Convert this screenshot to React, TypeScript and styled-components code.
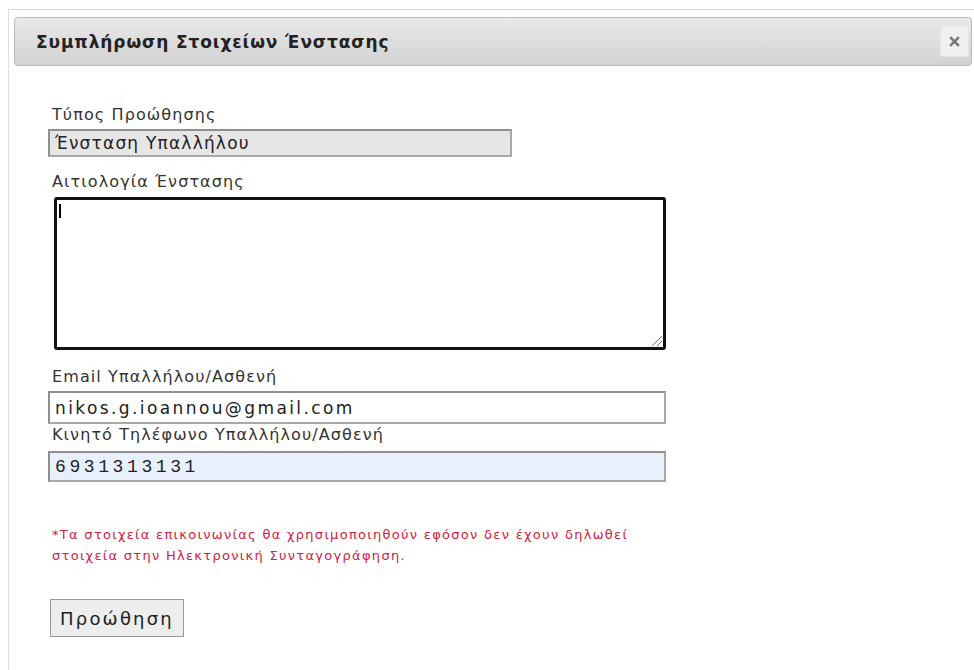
import React from "react";
import styled, { createGlobalStyle } from "styled-components";

const GlobalStyle = createGlobalStyle`
  html, body {
    margin: 0;
    padding: 0;
    background: #ffffff;
    overflow: hidden;
  }
  body {
    font-family: "DejaVu Sans", Verdana, sans-serif;
    color: #333333;
  }
`;

const Page = styled.div`
  padding: 9px 0 0 8px;
  height: 670px;
  box-sizing: border-box;
  overflow: hidden;
`;

const Dialog = styled.div`
  width: 990px;
  height: 661px;
  box-sizing: border-box;
  border-top: 1px solid #dddddd;
  border-left: 1px solid #dddddd;
  padding: 7px 0 0 5px;
  background: #ffffff;
`;

const TitleBar = styled.div`
  width: 958px;
  height: 49px;
  box-sizing: border-box;
  display: flex;
  align-items: center;
  justify-content: space-between;
  padding: 0 2px 0 21px;
  border: 1px solid #b9b9b9;
  border-radius: 4px;
  background: linear-gradient(#e9e9e9, #d2d2d2);
`;

const Title = styled.h1`
  margin: 0;
  font-family: "DejaVu Sans", Verdana, sans-serif;
  font-size: 17px;
  font-weight: bold;
  color: #222222;
  letter-spacing: 0.9px;
`;

const CloseButton = styled.button`
  width: 29px;
  height: 31px;
  padding: 0;
  display: flex;
  align-items: center;
  justify-content: center;
  border: 1px solid #e4e4e4;
  border-radius: 2px;
  background: #f0f0f0;
  cursor: pointer;
`;

const Form = styled.div`
  display: flex;
  flex-direction: column;
  align-items: flex-start;
  padding: 40px 0 0 34px;
`;

const Label = styled.label<{ $top: number }>`
  display: block;
  margin: ${(p) => p.$top}px 0 0 4px;
  font-family: "DejaVu Sans", Verdana, sans-serif;
  font-size: 16px;
  line-height: 18px;
  letter-spacing: 1.1px;
  color: #333333;
`;

const TextInput = styled.div<{ $width: number; $height: number; $top: number; $bg: string; $spacing: number; $mono?: boolean }>`
  width: ${(p) => p.$width}px;
  height: ${(p) => p.$height}px;
  margin-top: ${(p) => p.$top}px;
  box-sizing: border-box;
  display: flex;
  align-items: center;
  padding-left: 5px;
  border: 2px solid #8f8f8f;
  border-right-color: #a8a8a8;
  border-bottom-color: #a8a8a8;
  background: ${(p) => p.$bg};
  font-family: ${(p) => (p.$mono ? '"Liberation Mono", monospace' : '"DejaVu Sans", Verdana, sans-serif')};
  font-size: ${(p) => (p.$mono ? "18px" : "17px")};
  letter-spacing: ${(p) => p.$spacing}px;
  color: #222222;
`;

const TextArea = styled.div`
  position: relative;
  width: 612px;
  height: 153px;
  margin: 6px 0 0 6px;
  box-sizing: border-box;
  border: 3px solid #111111;
  border-radius: 3px;
  background: #ffffff;
`;

const Caret = styled.span`
  position: absolute;
  left: 2px;
  top: 4px;
  width: 2px;
  height: 14px;
  background: #000000;
`;

const Grip = styled.svg`
  position: absolute;
  right: 0;
  bottom: 0;
`;

const Note = styled.p`
  margin: 42px 0 0 4px;
  font-family: "DejaVu Sans", Verdana, sans-serif;
  font-size: 13px;
  line-height: 21px;
  letter-spacing: 1.3px;
  color: #d2203f;
`;

const SubmitButton = styled.button`
  margin: 33px 0 0 2px;
  width: 134px;
  height: 38px;
  box-sizing: border-box;
  border: 1px solid #9a9a9a;
  background: #ededed;
  font-family: "DejaVu Sans", Verdana, sans-serif;
  font-size: 18px;
  color: #222222;
  letter-spacing: 2.2px;
  padding: 0;
`;

export default function App() {
  return (
    <>
      <GlobalStyle />
      <Page>
        <Dialog>
          <TitleBar>
            <Title>Συμπλήρωση Στοιχείων Ένστασης</Title>
            <CloseButton aria-label="close">
              <svg width="11" height="11" viewBox="0 0 11 11">
                <path d="M2 2 L9 9 M9 2 L2 9" stroke="#7a7a7a" strokeWidth="2.6" strokeLinecap="square" />
              </svg>
            </CloseButton>
          </TitleBar>
          <Form>
            <Label $top={0}>Τύπος Προώθησης</Label>
            <TextInput $width={464} $height={28} $top={5} $bg="#e6e6e6" $spacing={1.2}>
              Ένσταση Υπαλλήλου
            </TextInput>
            <Label $top={16}>Αιτιολογία Ένστασης</Label>
            <TextArea>
              <Caret />
              <Grip width="14" height="14" viewBox="0 0 14 14">
                <path d="M13 3 L3 13 M13 8 L8 13" stroke="#777777" strokeWidth="1" />
              </Grip>
            </TextArea>
            <Label $top={18}>Email Υπαλλήλου/Ασθενή</Label>
            <TextInput $width={618} $height={33} $top={5} $bg="#ffffff" $spacing={2.4}>
              nikos.g.ioannou@gmail.com
            </TextInput>
            <Label $top={2}>Κινητό Τηλέφωνο Υπαλλήλου/Ασθενή</Label>
            <TextInput $width={618} $height={31} $top={7} $bg="#e8f0fe" $spacing={3.6} $mono>
              6931313131
            </TextInput>
            <Note>
              *Τα στοιχεία επικοινωνίας θα χρησιμοποιηθούν εφόσον δεν έχουν δηλωθεί
              <br />
              στοιχεία στην Ηλεκτρονική Συνταγογράφηση.
            </Note>
            <SubmitButton>Προώθηση</SubmitButton>
          </Form>
        </Dialog>
      </Page>
    </>
  );
}
